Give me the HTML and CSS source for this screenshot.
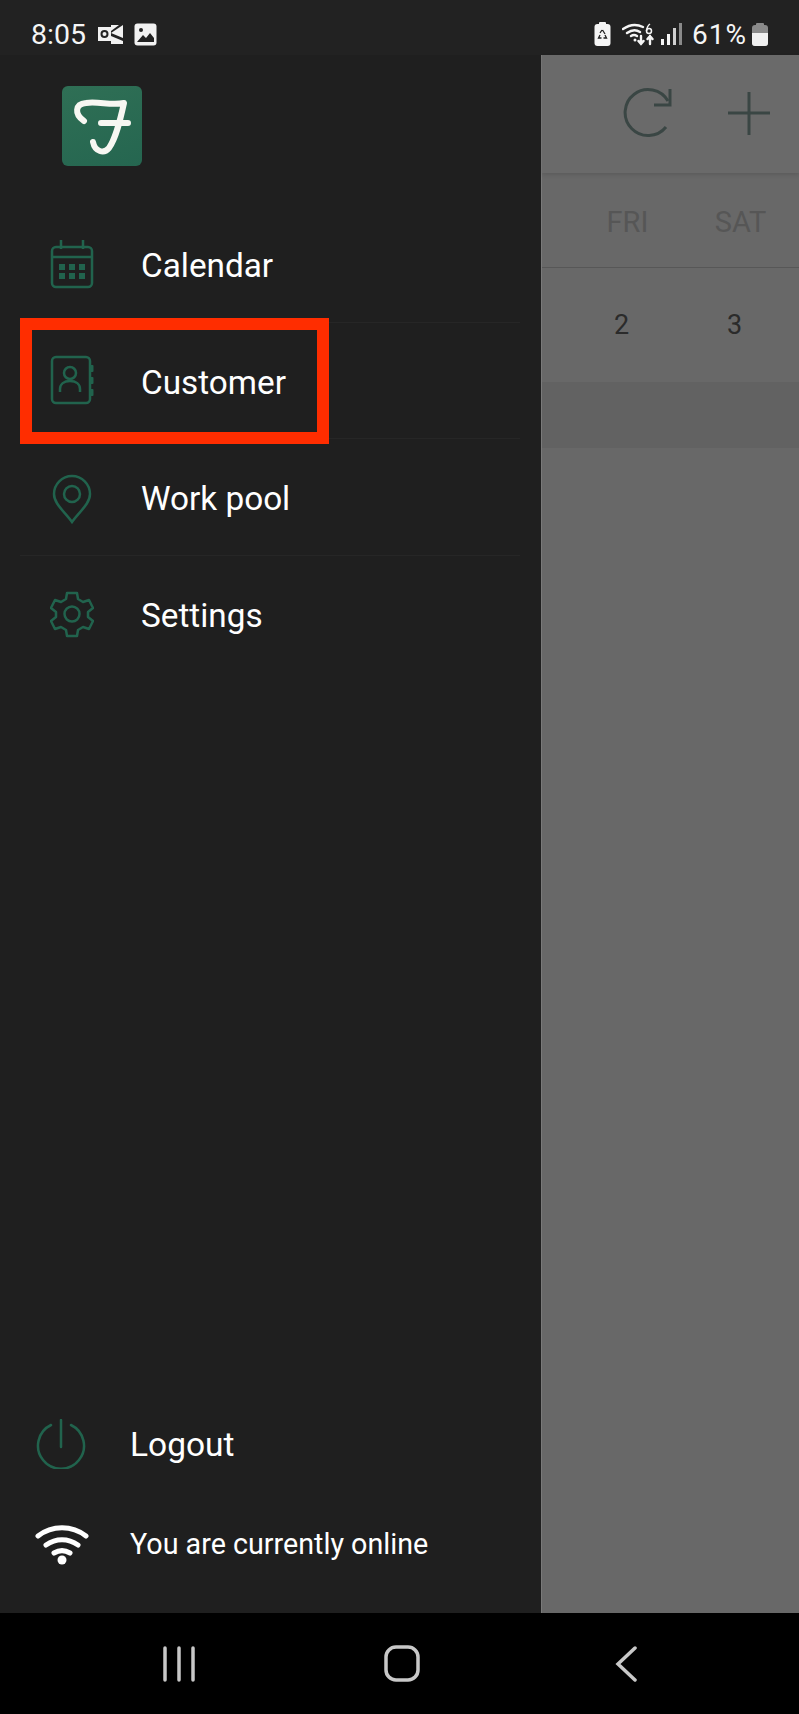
FILE: index.html
```html
<!doctype html>
<html lang="en">
  <head>
    <meta charset="UTF-8" />
    <meta name="viewport" content="width=device-width, initial-scale=1.0" />
    <title>Menu</title>
    <link rel="stylesheet" href="styles.css">
  </head>
  <body>
    <div class="status-bar">
      <div class="status-left">
        <span class="time">8:05</span>
        <svg class="outlook-icon" width="25" height="20" viewBox="0 0 25 20">
          <rect x="0" y="3" width="13" height="14" fill="#f2f2f2"/>
          <circle cx="6.500" cy="10" r="3" fill="none" stroke="#222" stroke-width="2"/>
          <path d="M13 1h8l-8 6zM13 9l12-8v13zM13 12l12 5v3H13z" fill="#f2f2f2"/>
        </svg>
        <svg class="picture-icon" width="23" height="23" viewBox="0 0 23 23">
          <rect x="0.500" y="0.500" width="22" height="22" rx="3" fill="#f2f2f2"/>
          <circle cx="7" cy="7" r="2" fill="#222"/>
          <path d="M3 19l6-7 3 3 4-5 4 5v4H3z" fill="#222"/>
        </svg>
      </div>
      <div class="status-right">
        <svg class="recycle-icon" width="17" height="24" viewBox="0 0 17 24">
          <rect x="5" y="0" width="7" height="3" rx="1" fill="#f5f5f5"/>
          <rect x="0.500" y="2" width="16" height="22" rx="3" fill="#f5f5f5"/>
          <path d="M8.500 8l2.500 4M6 13l-1.500 3h3M11 13l1.500 3h-3M8 8l-2 3" fill="none" stroke="#222" stroke-width="1.300"/>
        </svg>
        <svg class="wifi-small" width="32" height="24" viewBox="0 0 32 24">
          <g fill="none" stroke="#f5f5f5" stroke-width="2.400" stroke-linecap="round">
            <path d="M1 7q10-7 20 -2M5 11q7-5 13-1M9 14q3-2 6 0"/>
            <path d="M19 14v8M16.500 19l2.500 3 2.500-3M28 22v-8M25.500 17l2.500-3 2.500 3"/>
          </g>
          <circle cx="13" cy="18" r="1.500" fill="#f5f5f5"/>
          <circle cx="27" cy="9" r="2.500" fill="none" stroke="#f5f5f5" stroke-width="1.500"/>
          <path d="M28 2q-3 2-3.500 7" fill="none" stroke="#f5f5f5" stroke-width="1.500"/>
        </svg>
        <svg class="signal" width="21" height="22" viewBox="0 0 21 22">
          <rect x="0" y="16" width="3" height="6" fill="#f5f5f5"/>
          <rect x="6" y="11" width="3" height="11" fill="#f5f5f5"/>
          <rect x="12" y="5" width="3" height="17" fill="#d0d0d0"/>
          <rect x="18" y="0" width="3" height="22" fill="#8a8a8a"/>
        </svg>
        <span class="battery-text">61%</span>
        <svg width="16" height="23" viewBox="0 0 16 23">
          <rect x="4" y="0" width="8" height="3" rx="1" fill="#8a8a8a"/>
          <rect x="0" y="2" width="16" height="21" rx="3" fill="#8a8a8a"/>
          <path d="M0 10h16v10a3 3 0 0 1-3 3H3a3 3 0 0 1-3-3z" fill="#f0f0f0"/>
        </svg>
      </div>
    </div>

    <div class="main">
      <div class="drawer">
        <div class="logo-wrap">
          <div class="logo">
            <svg width="80" height="80" viewBox="0 0 80 80">
              <path d="M22 35C12 28 13 18 24 17 36 15 50 20 62 17 58 35 54 52 47 62 42 68 33 66 31 56M39 37H66" fill="none" stroke="#f7f7f2" stroke-width="6" stroke-linecap="round" stroke-linejoin="round"/>
            </svg>
          </div>
        </div>

        <ul class="menu">
          <li>
            <svg class="menu-icon" width="44" height="50" viewBox="0 0 44 50">
              <g fill="none" stroke="#21634d" stroke-width="2.500">
                <rect x="2" y="8" width="40" height="40" rx="4"/>
                <path d="M2 18h40M11 1v9M33 1v9"/>
              </g>
              <g fill="#21634d">
                <rect x="9" y="25" width="6" height="6"/>
                <rect x="19" y="25" width="6" height="6"/>
                <rect x="29" y="25" width="6" height="6"/>
                <rect x="9" y="34" width="6" height="6"/>
                <rect x="19" y="34" width="6" height="6"/>
                <rect x="29" y="34" width="6" height="6"/>
              </g>
            </svg>
            <span>Calendar</span>
          </li>
          <li>
            <svg class="menu-icon" width="44" height="50" viewBox="0 0 44 50">
              <g fill="none" stroke="#21634d" stroke-width="2.500">
                <rect x="2" y="2" width="38" height="46" rx="4"/>
                <circle cx="20" cy="18" r="6"/>
                <path d="M10 37v-3c0-5 4-8 10-8s10 3 10 8v3"/>
              </g>
              <g fill="#21634d">
                <rect x="40" y="10" width="3.500" height="7" rx="1"/>
                <rect x="40" y="22" width="3.500" height="7" rx="1"/>
                <rect x="40" y="34" width="3.500" height="7" rx="1"/>
              </g>
            </svg>
            <span>Customer</span>
          </li>
          <li>
            <svg class="menu-icon pin-icon" width="44" height="50" viewBox="0 0 44 50">
              <g fill="none" stroke="#21634d" stroke-width="2.500">
                <path d="M22 48C15 38 4 30 4 20a18 18 0 0 1 36 0c0 10-11 18-18 28z"/>
                <circle cx="22" cy="20" r="8"/>
              </g>
            </svg>
            <span>Work pool</span>
          </li>
          <li>
            <svg class="menu-icon" width="44" height="50" viewBox="0 0 44 50">
              <g fill="none" stroke="#21634d" stroke-width="2.500" stroke-linejoin="round">
                <path d="M17 4h10l1 6 5 3 6-2 4 8-5 4v5l5 4-4 8-6-2-5 3-1 6H17l-1-6-5-3-6 2-4-8 5-4v-5l-5-4 4-8 6 2 5-3z"/>
                <circle cx="22" cy="25" r="7.500"/>
              </g>
            </svg>
            <span>Settings</span>
          </li>
        </ul>

        <div class="drawer-footer">
          <div class="footer-row logout">
            <svg width="50" height="50" viewBox="0 0 50 50">
              <g fill="none" stroke="#21634d" stroke-width="2.500" stroke-linecap="round">
                <path d="M15 6a23 23 0 1 0 20 0"/>
                <path d="M25 1v27"/>
              </g>
            </svg>
            <span>Logout</span>
          </div>
          <div class="footer-row online">
            <svg width="54" height="42" viewBox="0 0 54 42">
              <g fill="none" stroke="#fff" stroke-width="5" stroke-linecap="round">
                <path d="M3 13c14-11 34-11 48 0"/>
                <path d="M11 22c10-7 22-7 32 0"/>
                <path d="M19 30c5-3 11-3 16 0"/>
              </g>
              <circle cx="27" cy="37" r="4.500" fill="#fff"/>
            </svg>
            <span>You are currently online</span>
          </div>
        </div>

        <div class="highlight"></div>
      </div>

      <div class="backdrop">
        <div class="toolbar">
          <svg width="52" height="52" viewBox="0 0 52 52">
            <g fill="none" stroke="#3a4644" stroke-width="3">
              <path d="M43 40A23 23 0 1 1 45 14"/>
              <path d="M47 2v16H31"/>
            </g>
          </svg>
          <svg width="44" height="44" viewBox="0 0 44 44">
            <path d="M22 1v43M1 22h42" fill="none" stroke="#3a4644" stroke-width="3"/>
          </svg>
        </div>
        <div class="week-row">
          <span>FRI</span>
          <span>SAT</span>
        </div>
        <div class="date-row">
          <span>2</span>
          <span>3</span>
        </div>
        <div class="band"></div>
      </div>
    </div>

    <div class="nav-bar">
      <svg width="34" height="36" viewBox="0 0 34 36">
        <path d="M3 2v32M17 2v32M31 2v32" fill="none" stroke="#c8c8c8" stroke-width="3.500" stroke-linecap="round"/>
      </svg>
      <svg class="nav-home" width="36" height="38" viewBox="0 0 36 38">
        <rect x="2" y="2" width="32" height="33" rx="10" fill="none" stroke="#c8c8c8" stroke-width="3.500"/>
      </svg>
      <svg class="nav-back" width="22" height="36" viewBox="0 0 22 36">
        <path d="M20 2L3 18l17 16" fill="none" stroke="#c8c8c8" stroke-width="3.500" stroke-linecap="round"/>
      </svg>
    </div>
  </body>
</html>
```

FILE: styles.css
```css
/* Page */
html, body {
  height: 100%;
}

body {
  margin: 0;
  display: flex;
  flex-direction: column;
  height: 1714px;
  overflow: hidden;
  font-family: Roboto, "Liberation Sans", sans-serif;
  background-color: #000;
}

svg {
  display: block;
  flex-shrink: 0;
}

/* Status bar */
.status-bar {
  height: 55px;
  flex-shrink: 0;
  box-sizing: border-box;
  display: flex;
  justify-content: space-between;
  align-items: center;
  padding: 13px 31px 0 31px;
  background-color: #222;
  color: #f5f5f5;
}

.status-left,
.status-right {
  display: flex;
  align-items: center;
}

.time {
  font-size: 28.500px;
  margin-right: 12px;
}

.outlook-icon {
  margin-right: 11px;
}

.wifi-small {
  margin-left: 11px;
  margin-right: 7px;
}

.battery-text {
  font-size: 28px;
  letter-spacing: 1px;
  margin-left: 10px;
  margin-right: 5px;
}

/* Main area */
.main {
  flex: 1;
  display: flex;
  min-height: 0;
}

/* Drawer */
.drawer {
  width: 541px;
  flex-shrink: 0;
  display: flex;
  flex-direction: column;
  position: relative;
  background-color: #1f1f1f;
  color: #fff;
}

.logo-wrap {
  height: 151px;
  padding: 31px 0 0 62px;
  box-sizing: border-box;
}

.logo {
  width: 80px;
  height: 80px;
  border-radius: 6px;
  background: linear-gradient(160deg, #2f6f55, #256650);
}

.menu {
  list-style: none;
  margin: 0;
  padding: 0 21px 0 20px;
}

.menu li {
  height: 116.500px;
  box-sizing: border-box;
  display: flex;
  align-items: center;
  padding-top: 4px;
  padding-left: 30px;
  gap: 47px;
  font-size: 33.300px;
  border-bottom: 1px solid #262626;
}

.menu li:last-child {
  border-bottom: none;
}

.menu-icon {
  margin-top: -4px;
}

.pin-icon {
  margin-top: 0;
}

.drawer-footer {
  margin-top: auto;
  padding-bottom: 19px;
}

.footer-row {
  display: flex;
  align-items: center;
  height: 100px;
}

.logout {
  padding-left: 36px;
  gap: 44px;
  font-size: 33.500px;
}

.online {
  padding-left: 35px;
  gap: 41px;
  font-size: 28.700px;
}

/* Red box from the annotated screenshot */
.highlight {
  position: absolute;
  left: 20px;
  top: 263px;
  width: 285px;
  height: 102px;
  border: 12px solid #ff2d00;
}

/* Dimmed page behind the drawer */
.backdrop {
  flex: 1;
  display: flex;
  flex-direction: column;
  background-color: #686868;
  border-left: 1px solid #7a7a7a;
}

.toolbar {
  height: 118px;
  flex-shrink: 0;
  box-sizing: border-box;
  display: flex;
  justify-content: flex-end;
  align-items: center;
  gap: 52px;
  padding-right: 28px;
  padding-bottom: 3px;
  background-color: #6a6a6a;
  box-shadow: 0 2px 4px rgba(0, 0, 0, 0.12);
}

.week-row,
.date-row {
  display: flex;
  justify-content: flex-end;
  text-align: center;
}

.week-row {
  height: 95px;
  box-sizing: border-box;
  align-items: center;
  padding-top: 4px;
  padding-right: 2px;
  font-size: 29px;
  color: #565656;
  border-bottom: 1px solid #575757;
}

.week-row span,
.date-row span {
  width: 113px;
}

.date-row {
  height: 114px;
  align-items: center;
  padding-right: 8px;
  font-size: 27px;
  color: #2b2b2b;
}

.band {
  height: 66px;
  background-color: #626262;
}

/* Bottom navigation */
.nav-bar {
  height: 101px;
  flex-shrink: 0;
  display: flex;
  align-items: center;
  background-color: #000;
  padding-left: 162px;
}

.nav-home {
  margin-left: 188px;
}

.nav-back {
  margin-left: 195px;
}
```
